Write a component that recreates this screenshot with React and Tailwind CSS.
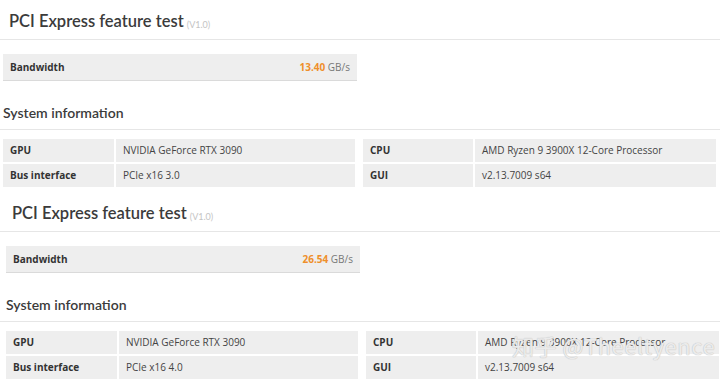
const sections = [
  {
    bandwidth: "13.40",
    bus: "PCIe x16 3.0",
  },
  {
    bandwidth: "26.54",
    bus: "PCIe x16 4.0",
  },
];

// One row of the two-column info table
function InfoRow({ label, value, wide }) {
  return (
    <div className="flex gap-[2px] h-[23px]">
      <div
        className={`${wide ? "w-[111px]" : "w-[110px]"} bg-[#eeeeee] flex items-center px-[7px] text-[10px] font-bold text-[#333]`}
      >
        {label}
      </div>
      <div className="flex-1 bg-[#eeeeee] flex items-center px-[7px] text-[10px] text-[#444]">
        {value}
      </div>
    </div>
  );
}

function ResultBlock({ data, indent }) {
  return (
    <div className="h-[192px] flex flex-col">
      {/* Header */}
      <div className={`h-[39px] flex items-end pb-[10px] ${indent}`}>
        <span
          className="pl-[6px] text-[16.5px] leading-none font-semibold text-[#3b3b3b]"
          style={{ fontFamily: "Lato, 'Open Sans', sans-serif" }}
        >
          PCI Express feature test
        </span>
        <span
          className="ml-[3px] text-[9px] leading-none text-[#c4c4c4]"
          style={{ fontFamily: "Lato, 'Open Sans', sans-serif" }}
        >
          (V1.0)
        </span>
      </div>
      <div className="h-px bg-[#e6e6e6]" />

      <div className={indent}>
        {/* Bandwidth bar */}
        <div className="mt-[14px] w-[354px] h-[27px] bg-[#eeeeee] border-b border-[#dadada] flex items-center justify-between px-[7px]">
          <span className="text-[10px] font-bold text-[#333]">Bandwidth</span>
          <span className="text-[10px] text-[#777]">
            <span className="font-bold text-[#ef8f2b]">{data.bandwidth}</span> GB/s
          </span>
        </div>

        {/* System information heading */}
        <div
          className="mt-[21px] h-[20px] flex items-center text-[14px] font-semibold text-[#3b3b3b]"
          style={{ fontFamily: "Lato, 'Open Sans', sans-serif" }}
        >
          System information
        </div>
      </div>
      <div className="mt-[7px] h-px bg-[#e6e6e6]" />

      {/* Info tables */}
      <div className={`mt-[9px] flex gap-[8px] ${indent} pr-[4px]`}>
        <div className="w-[352px] flex flex-col gap-[2px]">
          <InfoRow label="GPU" value="NVIDIA GeForce RTX 3090" wide />
          <InfoRow label="Bus interface" value={data.bus} wide />
        </div>
        <div className="flex-1 flex flex-col gap-[2px]">
          <InfoRow label="CPU" value="AMD Ryzen 9 3900X 12-Core Processor" />
          <InfoRow label="GUI" value="v2.13.7009 s64" />
        </div>
      </div>
    </div>
  );
}

export default function App() {
  return (
    <div
      className="relative w-[720px] h-[382px] bg-white overflow-hidden"
      style={{ fontFamily: "'Open Sans', 'Noto Sans', sans-serif" }}
    >
      <ResultBlock data={sections[0]} indent="pl-[3px]" />
      <div className="-mr-[3px]">
        <ResultBlock data={sections[1]} indent="pl-[6px]" />
      </div>

      {/* Watermark */}
      <div
        className="absolute left-[512px] top-[334px] text-[22px] leading-none text-white/70 tracking-wide"
        style={{
          fontFamily: "'Noto Sans CJK SC', 'Open Sans', sans-serif",
          textShadow: "0 0 1px #c0c0c0, 0 0 1px #c0c0c0",
        }}
      >
        知乎 @Theeltyence
      </div>
    </div>
  );
}
